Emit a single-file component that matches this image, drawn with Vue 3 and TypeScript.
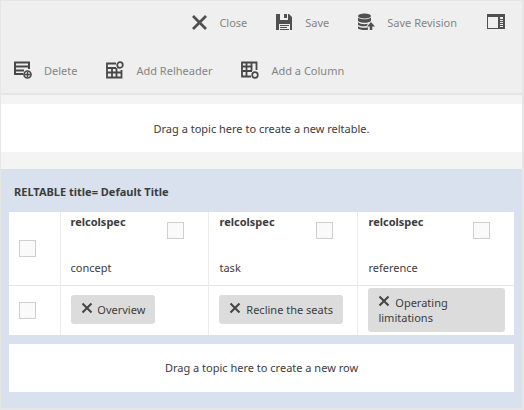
<script setup lang="ts">
import { ref } from 'vue'

interface Column {
  id: string
  type: string
  topic: string
}

const columns: Column[] = [
  { id: 'c1', type: 'concept', topic: 'Overview' },
  { id: 'c2', type: 'task', topic: 'Recline the seats' },
  { id: 'c3', type: 'reference', topic: 'Operating limitations' },
]

const selected = ref<string[]>([])
</script>

<template>
  <main class="editor">
    <header class="toolbars">
      <div class="toolbar main-actions">
        <button type="button" class="action">
          <svg width="15" height="15" viewBox="0 0 15 15" aria-hidden="true">
            <path d="M1 1 14 14M14 1 1 14" fill="none" stroke="#505050" stroke-width="2.800" />
          </svg>
          <span>Close</span>
        </button>
        <button type="button" class="action save">
          <svg width="18" height="18" viewBox="0 0 18 18" aria-hidden="true">
            <path fill="#505050" fill-rule="evenodd" d="M1 1h4v6h8V1h1l3 3v13h-2v-6H4v6H1zM9 1h3v4H9zM5 12h9v1H5zM5 14h7v1H5zM5 16h9v1H5z" />
          </svg>
          <span>Save</span>
        </button>
        <button type="button" class="action revision">
          <svg width="18" height="18" viewBox="0 0 18 18" aria-hidden="true">
            <g fill="#505050">
              <ellipse cx="7.500" cy="3" rx="6.500" ry="2.500" />
              <path d="M1 4.500c2 2.400 11 2.400 13 0v3.500c-2 2.400-11 2.400-13 0z" />
              <path d="M1 9.300c2 1.900 6 2.200 10 1.500L9.500 13c-3 .6-6.500.2-8.500-1z" />
              <path d="M1 13.200c2 1.500 6 1.700 10 1.300v2.200c-4 .7-8 .2-10-1.200z" />
              <path d="M14 9l4 4.500h-2.700V17h-2.600v-3.500H10z" />
            </g>
          </svg>
          <span>Save Revision</span>
        </button>
        <button type="button" class="action panel" aria-label="Toggle side panel">
          <svg width="18" height="18" viewBox="0 0 18 18" aria-hidden="true">
            <path fill="#505050" fill-rule="evenodd" d="M0 1h18v15H0zM1 4v11h10V4zM13 4v2h3V4zM13 7v1h3V7zM13 9v1h3V9zM13 11v1h3v-1zM13 13v1h3v-1z" />
          </svg>
        </button>
      </div>
      <div class="toolbar table-actions">
        <button type="button" class="action">
          <svg width="18" height="18" viewBox="0 0 18 18" aria-hidden="true">
            <path d="M9 13H1V1.500h14V8M1 5.500h14M1 9.500h9" fill="none" stroke="#484848" stroke-width="2" />
            <circle cx="13.500" cy="13.500" r="3.500" fill="#efefef" stroke="#484848" stroke-width="1.700" />
            <path d="M13.500 11v5M11 13.500h5" stroke="#484848" stroke-width="1.500" />
          </svg>
          <span>Delete</span>
        </button>
        <button type="button" class="action">
          <svg width="18" height="18" viewBox="0 0 18 18" aria-hidden="true">
            <path d="M10 2.500H1V16.500h14.500V9M1 7h9M1 11.500h14M6 7v9M10.500 7v9" fill="none" stroke="#484848" stroke-width="1.800" />
            <circle cx="14" cy="4" r="2.800" fill="#efefef" stroke="#484848" stroke-width="1.700" />
          </svg>
          <span>Add Relheader</span>
        </button>
        <button type="button" class="action">
          <svg width="18" height="18" viewBox="0 0 18 18" aria-hidden="true">
            <path d="M10 15.500H1V1.500h14.500V9M1 5.500h10.500M1 10h10M5.500 2v13M10.500 2v8" fill="none" stroke="#484848" stroke-width="1.800" />
            <circle cx="14" cy="14" r="2.800" fill="#efefef" stroke="#484848" stroke-width="1.700" />
          </svg>
          <span>Add a Column</span>
        </button>
      </div>
    </header>

    <div class="drop new-table">Drag a topic here to create a new reltable.</div>

    <section class="reltable">
      <h2>RELTABLE title= Default Title</h2>
      <table>
        <colgroup>
          <col class="col-select" />
          <col class="col-topic" />
          <col class="col-topic" />
          <col />
        </colgroup>
        <thead>
          <tr>
            <th class="select">
              <input v-model="selected" type="checkbox" value="header" aria-label="Select header row" />
            </th>
            <th v-for="column in columns" :key="column.id" class="spec" scope="col">
              <div class="spec-head">
                <label :for="column.id">relcolspec</label>
                <input :id="column.id" v-model="selected" type="checkbox" :value="column.id" />
              </div>
              <div class="type">{{ column.type }}</div>
            </th>
          </tr>
        </thead>
        <tbody>
          <tr>
            <td class="select">
              <input v-model="selected" type="checkbox" value="row" aria-label="Select row" />
            </td>
            <td v-for="column in columns" :key="column.id" class="topic">
              <div class="chip">
                <button type="button" class="remove" :aria-label="`Remove ${column.topic}`">
                  <svg width="12" height="12" viewBox="0 0 12 12" aria-hidden="true">
                    <path d="M1.500 1.500 10.500 10.500M10.500 1.500 1.500 10.500" fill="none" stroke="#444" stroke-width="2" />
                  </svg>
                </button>
                {{ column.topic }}
              </div>
            </td>
          </tr>
        </tbody>
      </table>
      <div class="drop new-row">Drag a topic here to create a new row</div>
    </section>
  </main>
</template>

<style>
body {
  background: #e9e9e9;
}
</style>

<style scoped>
.editor {
  box-sizing: border-box;
  border: solid #e6e6e6;
  border-width: 1px 2px 2px 1px;
  background: #f4f4f4;
  color: #3c3c3c;
  font: 11px/15px "Noto Sans", "Open Sans", sans-serif;
}

.toolbars {
  background: #efefef;
  border-bottom: 2px solid #e5e5e5;
}

.toolbar {
  display: flex;
  align-items: center;
}

.main-actions {
  height: 42px;
  justify-content: flex-end;
  padding-right: 17px;
}

.table-actions {
  height: 50px;
  gap: 29px;
  padding: 4px 13px 0;
  box-sizing: border-box;
}

.action {
  display: flex;
  align-items: center;
  gap: 12px;
  padding: 0;
  border: 0;
  background: none;
  color: #858585;
  font: inherit;
  white-space: nowrap;
  cursor: pointer;
}

.save,
.revision {
  margin-left: 28px;
}

.panel {
  margin-left: 30px;
}

.drop {
  display: flex;
  align-items: center;
  justify-content: center;
  height: 48px;
  background: #fff;
}

.new-table {
  margin: 9px 0 17px;
}

.reltable {
  padding: 15px 8px 16px;
  background: #d8e1ed;
}

h2 {
  margin: 0 0 13px;
  padding-left: 5px;
  font-size: 11px;
  line-height: 15px;
}

table {
  width: 100%;
  margin-bottom: 9px;
  border-collapse: collapse;
  table-layout: fixed;
  background: #fff;
}

.col-select {
  width: 51px;
}

.col-topic {
  width: 29.5%;
}

th,
td {
  box-sizing: border-box;
  padding: 0;
  text-align: left;
  font-weight: 400;
}

th + th,
td + td {
  border-left: 1px solid #ececec;
}

tbody tr {
  border-top: 1px solid #e6e6e6;
}

thead tr {
  height: 73px;
}

tbody tr {
  height: 49px;
}

.select {
  padding-left: 10px;
  vertical-align: middle;
}

.spec {
  padding: 2px 24px 10px 10px;
  vertical-align: top;
}

.spec-head {
  display: flex;
  justify-content: space-between;
  height: 46px;
}

.spec-head label {
  font-weight: 700;
}

.spec-head input {
  margin-top: 8px;
}

input {
  display: block;
  box-sizing: border-box;
  width: 17px;
  height: 17px;
  margin: 0;
  appearance: none;
  border: 1px solid #cfcfcf;
  background: #fafafa;
}

input:checked {
  background: #777;
  box-shadow: inset 0 0 0 3px #fafafa;
}

.topic {
  padding: 1px 9px 2px 10px;
  vertical-align: middle;
}

.chip {
  box-sizing: border-box;
  width: fit-content;
  padding: 7px 10px;
  border-radius: 3px;
  background: #dcdcdc;
}

.remove {
  width: 12px;
  height: 12px;
  margin-right: 2px;
  padding: 0;
  border: 0;
  background: none;
  cursor: pointer;
}

.remove svg {
  display: block;
}
</style>
